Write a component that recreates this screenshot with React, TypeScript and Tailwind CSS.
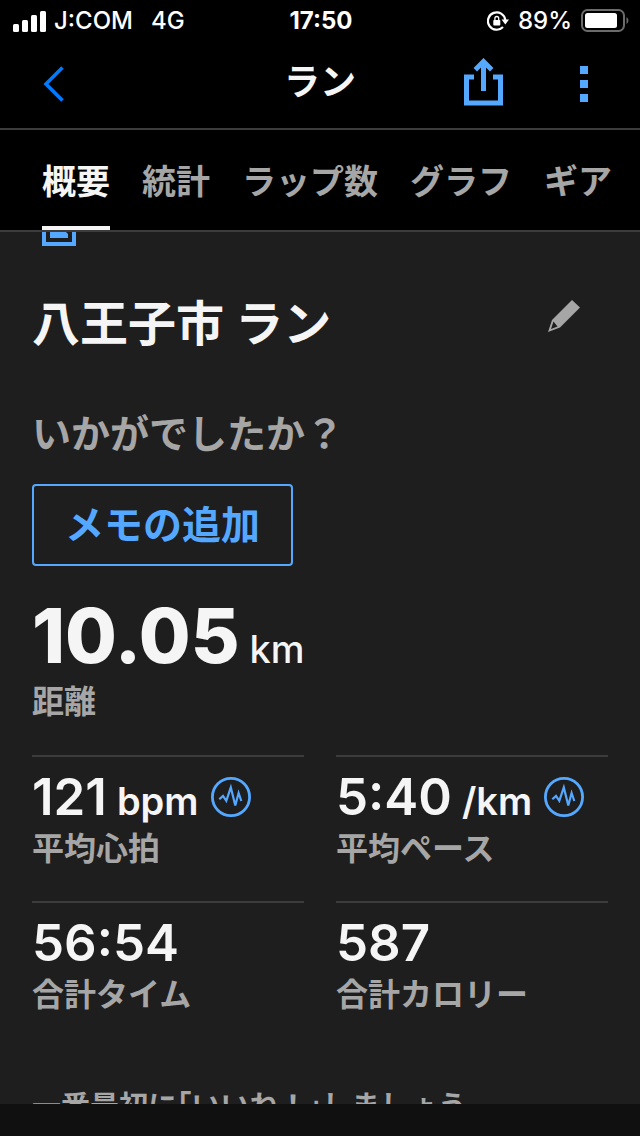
import { useState } from 'react'
import clsx from 'clsx'

const TABS = ['概要', '統計', 'ラップ数', 'グラフ', 'ギア']

const STATS = [
  { value: '121', unit: 'bpm', label: '平均心拍', chart: true },
  { value: '5:40', unit: '/km', label: '平均ペース', chart: true },
  { value: '56:54', label: '合計タイム' },
  { value: '587', label: '合計カロリー' },
]

function SignalIcon() {
  return (
    <svg className="h-[21px] w-[33px]" viewBox="0 0 33 21" fill="white">
      <rect x="0" y="13" width="6" height="8" rx="1.5" />
      <rect x="9" y="9" width="6" height="12" rx="1.5" />
      <rect x="18" y="4" width="6" height="17" rx="1.5" />
      <rect x="27" y="0" width="6" height="21" rx="1.5" />
    </svg>
  )
}

function RotationLockIcon() {
  return (
    <svg className="h-5 w-[22px]" viewBox="0 0 22 20" fill="none" stroke="white">
      <path d="M16 16A8.7 8.7 0 1 1 18.3 9" strokeWidth="2.2" />
      <path d="M14.6 8.5H22L18.3 13.4Z" fill="white" stroke="none" />
      <rect x="6.3" y="9" width="7" height="5.5" rx="0.8" fill="white" stroke="none" />
      <path d="M7.9 9V7.4A1.9 1.9 0 0 1 11.7 7.4V9" strokeWidth="1.3" />
    </svg>
  )
}

function BatteryIcon() {
  return (
    <svg className="h-6 w-12" viewBox="0 0 48 24" fill="none">
      <rect x="1" y="1" width="42" height="21" rx="5.5" stroke="#6b6b6b" strokeWidth="2" />
      <rect x="4" y="4" width="32" height="15" rx="2.5" fill="white" />
      <path d="M45.5 8C48 9.5 48 13.5 45.5 15Z" fill="#6b6b6b" />
    </svg>
  )
}

function ShareIcon() {
  return (
    <svg className="h-12 w-[39px]" viewBox="0 0 39 48" fill="none" stroke="#55a8ff" strokeWidth="5">
      <path d="M10 19H2.5V45H36.5V19H29" />
      <path d="M19.5 33V4" />
      <path d="M11.3 11.7L19.5 3.5L27.7 11.7" />
    </svg>
  )
}

function PencilIcon() {
  return (
    <svg className="size-8" viewBox="0 0 32 32">
      <path
        d="M24 0L32 7.5L12 27.5L0 32L4 20Z M5.5 21.5L3 29L9.5 26.5Z"
        fill="#a6a6a6"
        fillRule="evenodd"
      />
    </svg>
  )
}

function WaveIcon() {
  return (
    <svg className="size-10" viewBox="0 0 40 40" fill="none" stroke="#55a8ff">
      <circle cx="20" cy="20" r="18.6" strokeWidth="2.8" />
      <path
        d="M8.3 22.3L12 19L15.3 23.8L19.8 10.5L24.3 28.5L27.6 16L30.3 24"
        strokeWidth="2.2"
      />
    </svg>
  )
}

function StatusBar() {
  return (
    <div className="grid h-10 grid-cols-3 items-center pt-0.5 pr-[11px] pl-[13px] text-2xl leading-8 font-medium">
      <div className="flex items-center gap-2">
        <SignalIcon />
        <span>J:COM</span>
        <span className="ml-2.5">4G</span>
      </div>
      <span className="text-center font-bold">17:50</span>
      <div className="flex items-center justify-end gap-[9px]">
        <RotationLockIcon />
        <span>89%</span>
        <BatteryIcon />
      </div>
    </div>
  )
}

export default function App() {
  const [tab, setTab] = useState('概要')

  return (
    <div
      lang="ja"
      className="flex h-screen flex-col bg-[#1e1e1e] font-['Inter','Noto_Sans_CJK_JP',sans-serif] text-[#f5f5f5]"
    >
      <header className="shrink-0 bg-black text-white">
        <StatusBar />
        <div className="grid h-[90px] grid-cols-[1fr_auto_1fr] items-center border-b-2 border-[#3c3c3c] px-9">
          <button type="button" aria-label="戻る" className="justify-self-start p-1.5">
            <svg className="h-9 w-6" viewBox="0 0 24 36" fill="none" stroke="#007aff" strokeWidth="3.6">
              <path d="M20.5 1.5L4 18L20.5 34.5" />
            </svg>
          </button>
          <h1 className="pb-1 text-4xl leading-10 font-bold text-[#f5f5f5]">ラン</h1>
          <div className="flex items-center gap-[61px] justify-self-end">
            <button type="button" aria-label="共有" className="pb-1">
              <ShareIcon />
            </button>
            <button type="button" aria-label="メニュー" className="px-4">
              <svg className="h-9 w-2" viewBox="0 0 8 36" fill="#55a8ff">
                <path d="M0 0H8V8H0ZM0 14H8V22H0ZM0 28H8V36H0Z" />
              </svg>
            </button>
          </div>
        </div>
        <nav className="flex h-[102px] gap-8 overflow-hidden border-b-2 border-[#3c3c3c] px-[42px]">
          {TABS.map((name) => (
            <button
              key={name}
              type="button"
              onClick={() => setTab(name)}
              className={clsx(
                'shrink-0 border-b-4 pt-2 text-[34px] leading-10 font-bold',
                name === tab
                  ? 'border-[#f5f5f5] text-[#f5f5f5]'
                  : 'border-transparent text-[#a6a6a6]'
              )}
            >
              {name}
            </button>
          ))}
        </nav>
      </header>

      <main className="min-h-0 flex-1 overflow-hidden px-8">
        {/* lower edge of the device icon, scrolled under the tabs */}
        <svg className="ml-2.5 h-3.5 w-[34px]" viewBox="0 0 34 14" fill="#55a8ff">
          <path d="M0 0H4V10H30V0H34V14H0Z" />
          <path d="M8 0H24L26 2V6H8Z" />
        </svg>

        <div className="mt-[46px] flex items-start justify-between pr-7">
          <h2 className="text-5xl leading-[64px] font-bold">八王子市 ラン</h2>
          <button type="button" aria-label="編集" className="pt-2">
            <PencilIcon />
          </button>
        </div>

        <p className="mt-[54px] text-[39px] leading-[48px] font-bold text-[#a6a6a6]">いかがでしたか？</p>
        <button
          type="button"
          className="mt-[26px] block rounded border-2 border-[#55a8ff] px-[31px] py-[15px] text-[39px] leading-[48px] font-bold text-[#55a8ff]"
        >
          メモの追加
        </button>

        <section className="mt-[30px]">
          <div className="flex items-baseline gap-2.5 font-extrabold">
            <span className="text-[75px] leading-[80px]">10.05</span>
            <span className="text-[38px] leading-10 font-medium">km</span>
          </div>
          <p className="mt-1.5 text-[32px] leading-10 font-bold text-[#a6a6a6]">距離</p>
        </section>

        <section className="mt-[33px] grid grid-cols-2 gap-x-8">
          {STATS.map((stat) => (
            <div key={stat.label} className="border-t-2 border-[#3c3c3c] pt-2.5 pb-[31px]">
              <div className="flex items-center gap-3">
                <div className="flex items-baseline gap-2.5 font-semibold">
                  <span className="text-[51px] leading-[60px]">{stat.value}</span>
                  {stat.unit && <span className="text-[38px] leading-10">{stat.unit}</span>}
                </div>
                {stat.chart && (
                  <button type="button" aria-label={stat.label + 'のグラフ'}>
                    <WaveIcon />
                  </button>
                )}
              </div>
              <p className="text-[32px] leading-[43px] font-bold text-[#a6a6a6]">{stat.label}</p>
            </div>
          ))}
        </section>

        <p className="mt-[38px] text-[29px] leading-[44px] font-bold whitespace-nowrap text-[#a6a6a6]">
          一番最初に<span className="[font-feature-settings:'halt']">「</span>いいね！
          <span className="[font-feature-settings:'halt']">」</span>しましょう
        </p>
      </main>

      <footer className="h-8 shrink-0 bg-[#101010]" />
    </div>
  )
}
